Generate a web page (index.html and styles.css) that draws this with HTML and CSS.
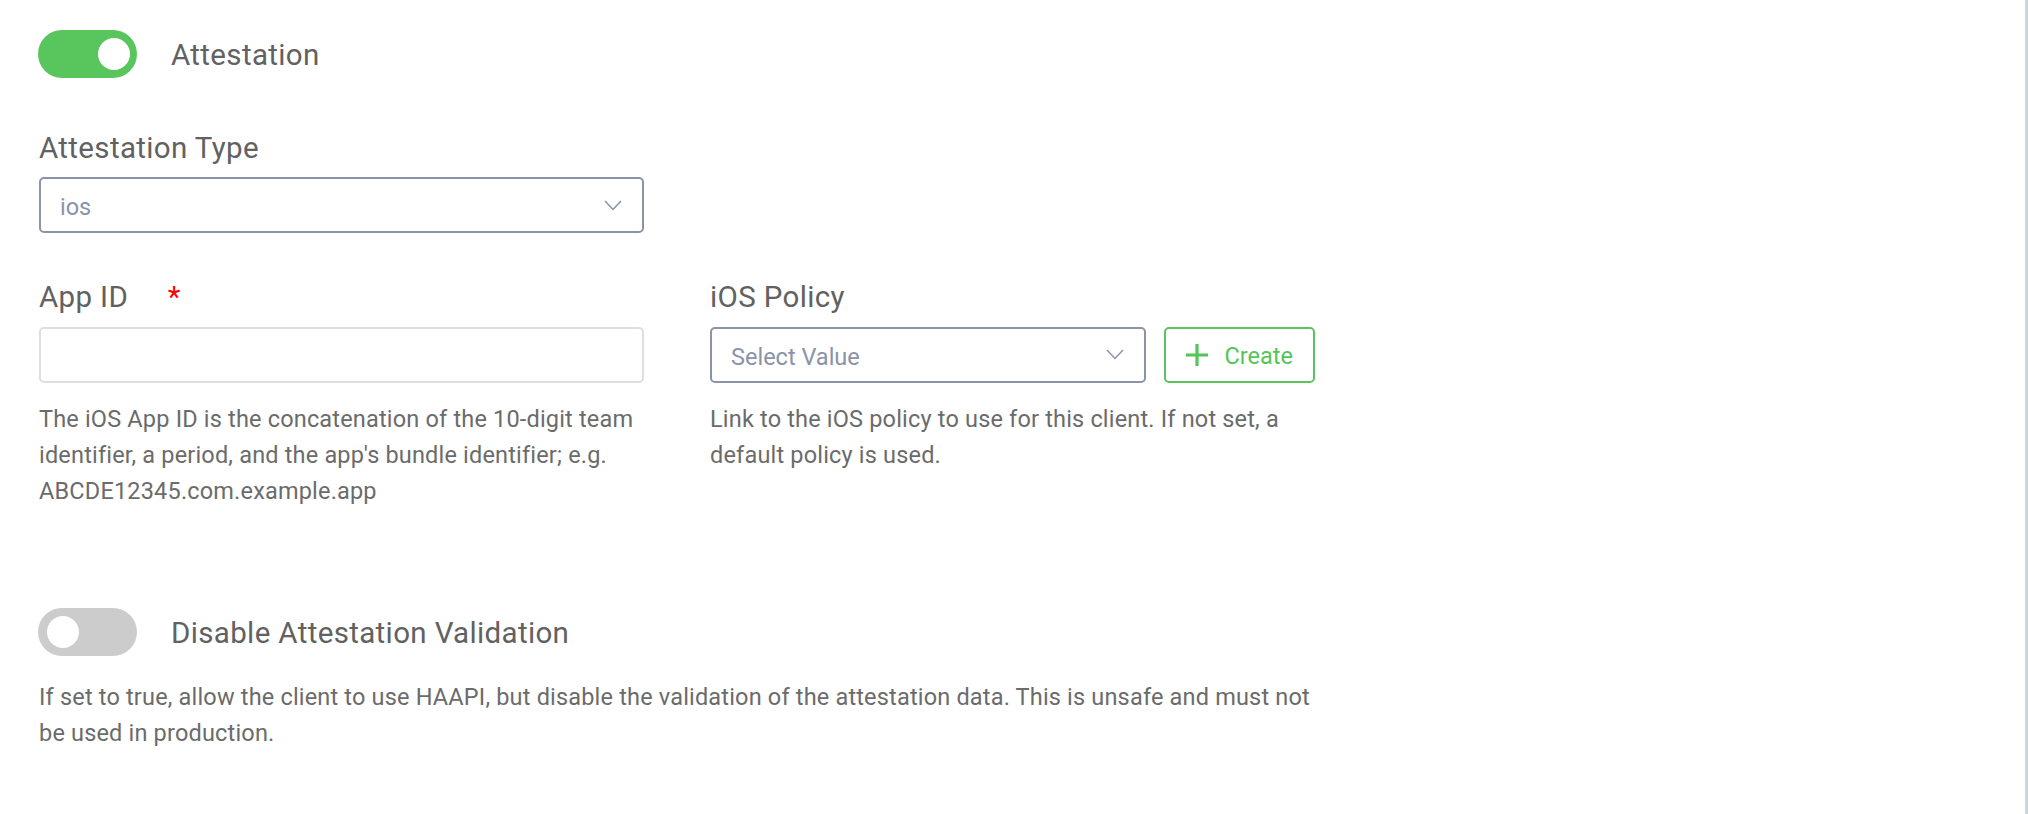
FILE: index.html
```html
<!DOCTYPE html>
<html lang="en">
<head>
  <meta charset="UTF-8">
  <meta name="viewport" content="width=device-width, initial-scale=1.0">
  <title>Attestation</title>
  <link rel="stylesheet" href="styles.css">
</head>
<body>
  <div class="form">

    <div class="switch-row">
      <span class="switch on"><span class="knob"></span></span>
      <span class="switch-label">Attestation</span>
    </div>

    <div class="field type-field">
      <label class="field-label">Attestation Type</label>
      <div class="select">
        <span class="select-value">ios</span>
        <svg class="chevron" width="18" height="11" viewBox="0 0 18 11">
          <polyline points="1,1 9,9.5 17,1" fill="none" stroke="#8a93a8" stroke-width="1.5"/>
        </svg>
      </div>
    </div>

    <div class="field-grid">
      <div class="field">
        <label class="field-label">App ID <span class="required">*</span></label>
        <input class="text-input" type="text">
        <p class="help">The iOS App ID is the concatenation of the 10-digit team identifier, a period, and the app's bundle identifier; e.g. ABCDE12345.com.example.app</p>
      </div>

      <div class="field">
        <label class="field-label">iOS Policy</label>
        <div class="select-row">
          <div class="select">
            <span class="select-value">Select Value</span>
            <svg class="chevron" width="18" height="11" viewBox="0 0 18 11">
              <polyline points="1,1 9,9.5 17,1" fill="none" stroke="#8a93a8" stroke-width="1.5"/>
            </svg>
          </div>
          <button class="create-btn">
            <svg width="22" height="22" viewBox="0 0 22 22">
              <path d="M11 0V22M0 11H22" stroke="#55c45a" stroke-width="3.2"/>
            </svg>
            <span class="btn-text">Create</span>
          </button>
        </div>
        <p class="help">Link to the iOS policy to use for this client. If not set, a default policy is used.</p>
      </div>
    </div>

    <div class="switch-row validation-row">
      <span class="switch"><span class="knob"></span></span>
      <span class="switch-label">Disable Attestation Validation</span>
    </div>
    <p class="help bottom-help">If set to true, allow the client to use HAAPI, but disable the validation of the attestation data. This is unsafe and must not be used in production.</p>

  </div>
</body>
</html>
```

FILE: styles.css
```css
html, body {
  margin: 0;
  padding: 0;
}

body {
  min-height: 100vh;
  box-sizing: border-box;
  background: #fff;
  border-right: 3px solid #cad7de;
  font-family: Roboto, "Liberation Sans", sans-serif;
  color: #616161;
}

.form {
  width: 1276px;
  padding: 30px 0 0 39px;
}

/* Toggle switches */
.switch-row {
  display: flex;
  align-items: center;
  gap: 34px;
  margin-left: -1px;
}

.switch {
  position: relative;
  width: 99px;
  height: 48px;
  border-radius: 24px;
  background: #cccccc;
  flex-shrink: 0;
}

.switch.on {
  background: #58c65d;
}

.knob {
  position: absolute;
  top: 8px;
  left: 9px;
  width: 32px;
  height: 32px;
  border-radius: 50%;
  background: #fff;
}

.switch.on .knob {
  left: auto;
  right: 7px;
}

.switch-label {
  padding-top: 3px;
  font-size: 29.5px;
  line-height: 1.2;
  letter-spacing: 0.35px;
}

/* Fields */
.field {
  display: flex;
  flex-direction: column;
}

.type-field {
  width: 605px;
  margin-top: 53px;
}

.field-label {
  display: block;
  font-size: 29.5px;
  line-height: 1.2;
  letter-spacing: 0.35px;
  margin-bottom: 11px;
}

.required {
  color: #ff0000;
  margin-left: 32px;
}

.field-grid {
  display: grid;
  grid-template-columns: 605px 605px;
  column-gap: 66px;
  margin-top: 47px;
}

.select,
.text-input {
  box-sizing: border-box;
  height: 56px;
  border-radius: 5px;
  font-family: inherit;
  font-size: 23.5px;
}

.select {
  display: flex;
  align-items: center;
  justify-content: space-between;
  padding: 0 20px 0 19px;
  border: 2px solid #8b93a8;
  color: #8a93a8;
}

.select-value {
  padding-top: 5px;
  line-height: 1;
}

.text-input {
  width: 100%;
  margin: 0;
  border: 2px solid #dedede;
  padding: 0 18px;
  outline: none;
}

.select-row {
  display: flex;
  gap: 18px;
}

.select-row .select {
  flex: 1;
}

.create-btn {
  display: flex;
  align-items: center;
  gap: 17px;
  box-sizing: border-box;
  height: 56px;
  padding: 0 20px;
  border: 2px solid #5ac55f;
  border-radius: 5px;
  background: #fff;
  color: #55c45a;
  font-family: inherit;
  font-size: 23.5px;
}

.btn-text {
  padding-top: 3px;
}

.help {
  margin: 18px 0 0;
  font-size: 23.5px;
  line-height: 36px;
  letter-spacing: 0.18px;
  color: #6b6b6b;
}

.validation-row {
  margin-top: 99px;
}

.bottom-help {
  margin-top: 23px;
}
```
